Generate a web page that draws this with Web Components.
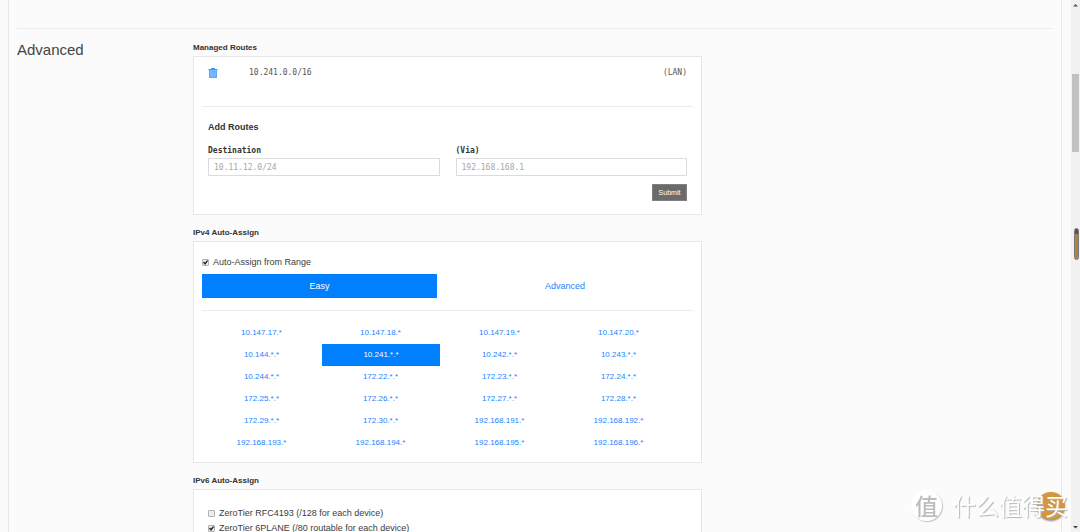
<!DOCTYPE html>
<html lang="en">
<head>
<meta charset="utf-8">
<title>Network settings</title>
<style>
body { margin: 0; background: #fbfbfb; color: #3c3c3c; font: 9px/16px "Liberation Sans", Arial, "Noto Sans CJK SC", sans-serif; }
</style>
</head>
<body>
<app-shell>
  <settings-section heading="Advanced">
    <settings-panel heading="Managed Routes">
      <route-item target="10.241.0.0/16" via="(LAN)"></route-item>
      <route-form></route-form>
    </settings-panel>
    <settings-panel heading="IPv4 Auto-Assign">
      <range-picker></range-picker>
    </settings-panel>
    <settings-panel heading="IPv6 Auto-Assign">
      <check-list>
        <check-option label="ZeroTier RFC4193 (/128 for each device)"></check-option>
        <check-option label="ZeroTier 6PLANE (/80 routable for each device)" checked></check-option>
      </check-list>
    </settings-panel>
  </settings-section>
  <scroll-rail slot="rail"></scroll-rail>
</app-shell>
<site-mark></site-mark>

<script>
class Base extends HTMLElement {
  connectedCallback() {
    if (this.shadowRoot) return;
    this.attachShadow({ mode: "open" }).innerHTML =
      `<style>*{box-sizing:border-box}:host{display:block}hr{border:0;border-top:1px solid #ececec;margin:0}</style>` + this.view();
  }
}

customElements.define("app-shell", class extends Base {
  view() { return `
    <style>
      :host { display: grid; grid-template-columns: minmax(0,1fr) 9px; height: 100vh; overflow: hidden; }
      main { margin: 0 9px 0 8px; padding: 28px 8px 0; border: solid #e8e8e8; border-width: 0 1px; overflow: hidden; }
    </style>
    <main><hr><slot></slot></main><slot name="rail"></slot>`; }
});

customElements.define("settings-section", class extends Base {
  view() { return `
    <style>
      :host { display: grid; grid-template-columns: 176fr 509fr 351fr; padding-top: 11px; }
      h2 { margin: 0; font-size: 15px; line-height: 20px; font-weight: 400; color: #444; }
      div { display: grid; gap: 10px; }
    </style>
    <h2>${this.getAttribute("heading")}</h2><div><slot></slot></div>`; }
});

customElements.define("settings-panel", class extends Base {
  view() { return `
    <style>
      h3 { margin: 0; font-size: 8px; line-height: 16px; color: #333; }
      section { background: #fff; border: 1px solid #e6e6e6; padding: 8px; }
    </style>
    <h3>${this.getAttribute("heading")}</h3><section><slot></slot></section>`; }
});

customElements.define("route-item", class extends Base {
  view() { return `
    <style>
      :host { font: 8px/16px "DejaVu Sans Mono", Consolas, monospace; color: #555; }
      .row { display: flex; align-items: center; padding: 0 6px; margin-bottom: 25px; }
      button { display: flex; justify-content: center; width: 10px; height: 16px; margin-right: 31px; padding: 3px 0; border: 0; background: none; }
      .via { margin-left: auto; }
    </style>
    <div class="row">
      <button aria-label="Delete route"><svg width="10" height="10" viewBox="0 0 10 10"><path fill="#3d97ff" d="M.5 1H3V0h4v1h2.500v1.500h-9z"/><path fill="#5ba7ff" d="M1 2.500h8V10H1z"/><path stroke="#a9d0ff" stroke-width=".7" d="M3 3.500V9M5 3.500V9M7 3.500V9"/></svg></button>
      <span>${this.getAttribute("target")}</span><span class="via">${this.getAttribute("via")}</span>
    </div><hr>`; }
});

customElements.define("route-form", class extends Base {
  view() { return `
    <style>
      form { padding: 12px 6px 5px; }
      h4 { margin: 0 0 8px; font-size: 9px; line-height: 16px; color: #333; }
      .fields { display: grid; grid-template-columns: 1fr 1fr; gap: 16px; }
      label { display: block; font: bold 8px/15px "DejaVu Sans Mono", Consolas, monospace; color: #333; }
      input { display: block; width: 100%; height: 18px; border: 1px solid #dcdcdc; padding: 0 5px; background: #fff; font: 8px/16px "DejaVu Sans Mono", Consolas, monospace; border-radius: 0; }
      input::placeholder { color: #a6a6a6; }
      button { display: block; margin: 8px 0 0 auto; width: 35px; height: 17px; padding: 0; border: 1px solid #808080; background: #6b6b6b; color: #fff; font: 7px/15px "Liberation Sans", sans-serif; }
    </style>
    <form>
      <h4>Add Routes</h4>
      <div class="fields">
        <div><label for="d">Destination</label><input id="d" placeholder="10.11.12.0/24"></div>
        <div><label for="v">(Via)</label><input id="v" placeholder="192.168.168.1"></div>
      </div>
      <button type="button">Submit</button>
    </form>`; }
});

customElements.define("check-option", class extends Base {
  view() { return `
    <style>
      label { display: flex; align-items: center; gap: 4px; line-height: 15px; }
      input { appearance: none; margin: 0; width: 7px; height: 7px; border: 1px solid #b4b4b4; border-radius: 1px; background: #ededed; }
      input:checked::before { content: ""; display: block; width: 5px; height: 5px; background: #222; clip-path: polygon(0 48%, 20% 30%, 40% 55%, 82% 0, 100% 18%, 42% 100%); }
    </style>
    <label><input type="checkbox" ${this.hasAttribute("checked") ? "checked" : ""}>${this.getAttribute("label")}</label>`; }
});

customElements.define("check-list", class extends Base {
  view() { return `<style>:host { padding: 8px 6px; }</style><slot></slot>`; }
});

customElements.define("range-picker", class extends Base {
  view() {
    const ranges = ["10.147.17.*","10.147.18.*","10.147.19.*","10.147.20.*","10.144.*.*","10.241.*.*","10.242.*.*","10.243.*.*","10.244.*.*","172.22.*.*","172.23.*.*","172.24.*.*","172.25.*.*","172.26.*.*","172.27.*.*","172.28.*.*","172.29.*.*","172.30.*.*","192.168.191.*","192.168.192.*","192.168.193.*","192.168.194.*","192.168.195.*","192.168.196.*"];
    return `
    <style>
      :host { padding-top: 5px; }
      a { display: block; text-align: center; text-decoration: none; color: #1a84ff; }
      a.on { background: #0080ff; color: #fff; }
      .tabs { display: grid; grid-template-columns: 235fr 256fr; margin: 4px 0 12px; line-height: 24px; }
      .grid { display: grid; grid-template-columns: repeat(4, 1fr); margin: 11px 15px 0 0; font-size: 8px; line-height: 22px; }
      .grid .on { margin-left: 1px; }
    </style>
    <check-option label="Auto-Assign from Range" checked></check-option>
    <nav class="tabs"><a class="on" href="#easy">Easy</a><a href="#advanced">Advanced</a></nav>
    <hr>
    <div class="grid">${ranges.map(r => `<a href="#range"${r === "10.241.*.*" ? ' class="on"' : ""}>${r}</a>`).join("")}</div>`;
  }
});

customElements.define("scroll-rail", class extends Base {
  view() { return `
    <style>
      :host { position: relative; background: #f1f1f1; }
      svg { display: block; width: 9px; height: 9px; }
      .col { display: flex; flex-direction: column; height: 100%; }
      .thumb { height: 78px; margin: 65px 1px auto; background: #c1c1c1; }
      .pill { position: absolute; right: 1px; top: 228px; width: 5px; height: 32px; border-radius: 3px; border: 1px solid #77777d; background: linear-gradient(#555 0 5px, #b58138 5px); }
    </style>
    <div class="col">
      <svg viewBox="0 0 9 9"><path fill="#555" d="M2 6.500L4.500 4L7 6.500z"/></svg>
      <div class="thumb"></div>
      <svg viewBox="0 0 9 9"><path fill="#444" d="M2 3h5L4.500 5.500z"/></svg>
    </div>
    <div class="pill"></div>`; }
});

customElements.define("site-mark", class extends Base {
  view() { return `
    <style>
      :host { position: fixed; right: 12px; bottom: 11px; display: flex; align-items: center; gap: 11px; font-family: "Noto Sans CJK SC", sans-serif; pointer-events: none; }
      .seal { width: 31px; height: 31px; border-radius: 50%; background: #fff; box-shadow: 1px 1px 1px #c4c4c4; color: #bdbdbd; font-size: 23px; font-weight: 500; line-height: 30px; text-align: center; }
      .name { position: relative; font-size: 23px; line-height: 32px; color: #fff; text-shadow: 1px 1px 1px #b4b4b4; }
      .coin { position: absolute; right: 3px; top: 3px; width: 28px; height: 28px; border-radius: 50%; background: #d4953d; box-shadow: 0 1px 2px #888; }
      .name span { position: relative; }
    </style>
    <div class="seal">值</div><div class="name"><i class="coin"></i><span>什么值得买</span></div>`; }
});
</script>
</body>
</html>
